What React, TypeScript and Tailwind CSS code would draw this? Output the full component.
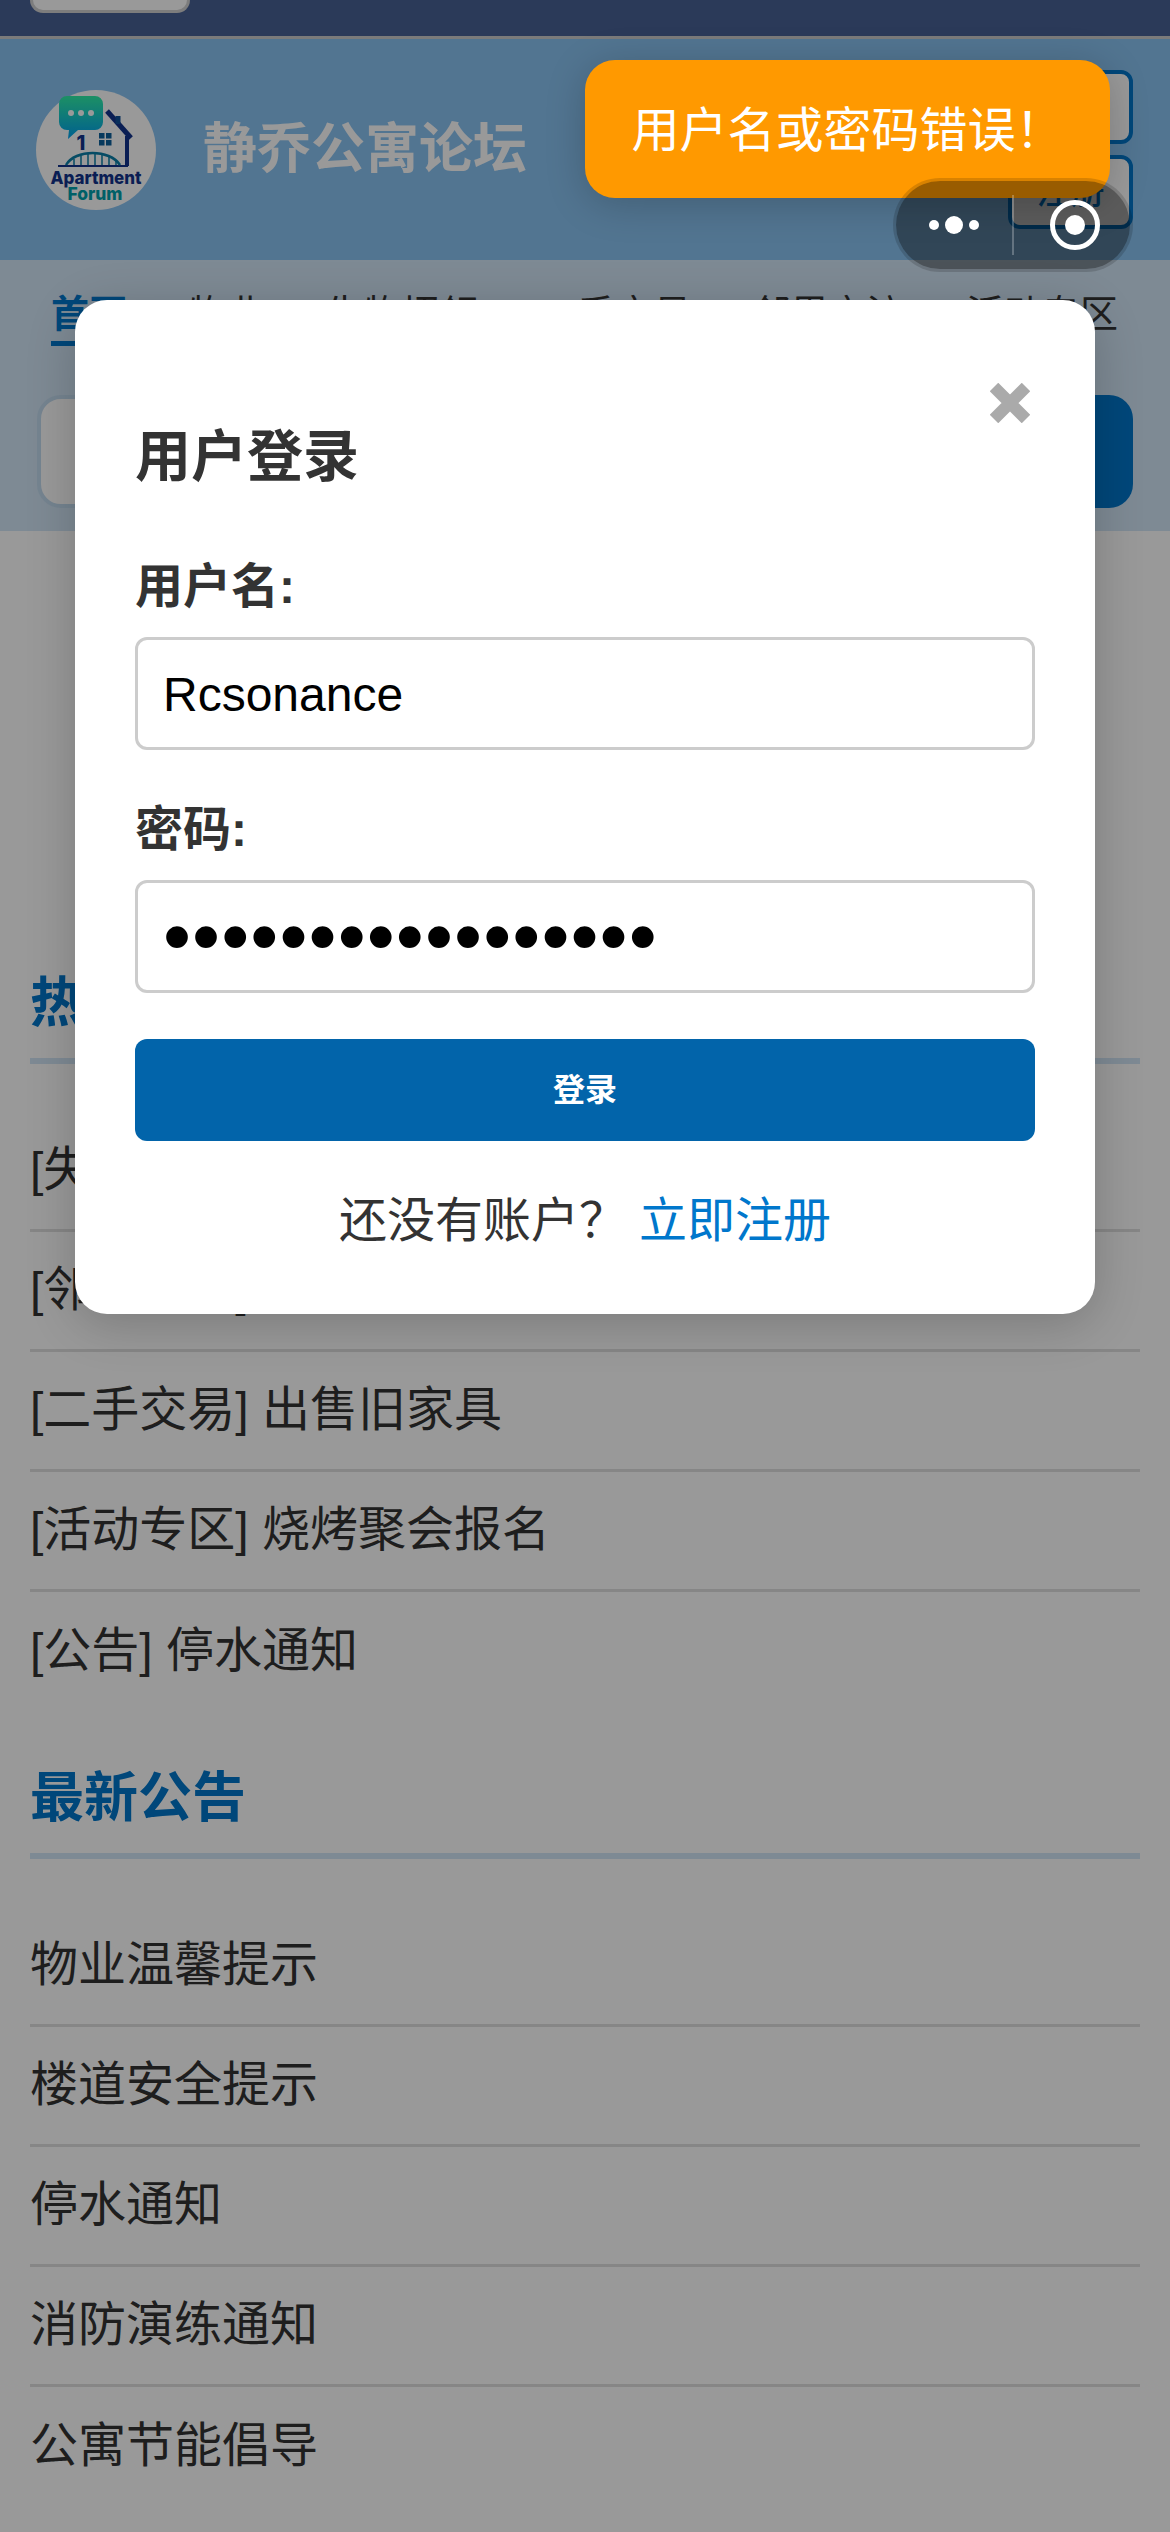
const hotTopics = [
  '[失物招领] 寻找丢失的钥匙',
  '[邻里交流] 周末一起打球',
  '[二手交易] 出售旧家具',
  '[活动专区] 烧烤聚会报名',
  '[公告] 停水通知',
]

const notices = ['物业温馨提示', '楼道安全提示', '停水通知', '消防演练通知', '公寓节能倡导']

const navItems = ['物业', '失物招领', '二手交易', '邻里交流', '活动专区']

function Logo() {
  return (
    <svg viewBox="0 0 120 120" className="h-[120px] w-[120px] shrink-0">
      <defs>
        <linearGradient id="bubble" x1="0" y1="0" x2="0" y2="1">
          <stop offset="0" stopColor="#30f0a8" />
          <stop offset="1" stopColor="#00a0f0" />
        </linearGradient>
      </defs>
      <circle cx="60" cy="60" r="60" fill="#ffffff" />
      <path
        d="M32 6h27a8 8 0 0 1 8 8v18a8 8 0 0 1-8 8H42l-10 9 1-9h-2a8 8 0 0 1-8-8V14a8 8 0 0 1 8-8z"
        fill="url(#bubble)"
      />
      <circle cx="35" cy="23" r="3" fill="#ffffff" />
      <circle cx="45" cy="23" r="3" fill="#ffffff" />
      <circle cx="55" cy="23" r="3" fill="#ffffff" />
      <path d="M71 21l24 27" stroke="#12338c" strokeWidth="5" fill="none" />
      <path d="M82 26v8" stroke="#0e4f98" strokeWidth="5" fill="none" />
      <path d="M91 46v30" stroke="#12338c" strokeWidth="4" fill="none" />
      <rect x="63" y="43" width="5.5" height="5.5" fill="#0a5f9c" />
      <rect x="70" y="43" width="5.5" height="5.5" fill="#0a5f9c" />
      <rect x="63" y="50" width="5.5" height="5.5" fill="#0a5f9c" />
      <rect x="70" y="50" width="5.5" height="5.5" fill="#0a5f9c" />
      <text x="45" y="60" textAnchor="middle" fontFamily="Inter" fontWeight="800" fontSize="20" fill="#12338c">
        1
      </text>
      <path d="M22 76h70" stroke="#12338c" strokeWidth="2" />
      <path d="M30 75c9-16 44-16 54 0" stroke="#0a7fa8" strokeWidth="2.5" fill="none" />
      <path d="M38 69v6M45 66v9M52 64v11M59 64v11M66 65v10M73 66v9M80 71v4" stroke="#0a7fa8" strokeWidth="1.5" />
      <text x="60" y="94" textAnchor="middle" textLength="91" lengthAdjust="spacingAndGlyphs" fontFamily="Inter" fontWeight="800" fontSize="18" fill="#12338c">
        Apartment
      </text>
      <text x="59" y="110" textAnchor="middle" textLength="55" lengthAdjust="spacingAndGlyphs" fontFamily="Inter" fontWeight="800" fontSize="18" fill="#00a0ac">
        Forum
      </text>
    </svg>
  )
}

function HeaderButton({ label }: { label: string }) {
  return (
    <div className="flex h-[74px] w-[125px] items-center justify-center rounded-xl border-4 border-[#0077cc] bg-white text-[34px] font-medium text-[#0077cc]">
      {label}
    </div>
  )
}

function Section({ title, items }: { title: string; items: string[] }) {
  return (
    <section className="mx-[30px]">
      <h2 className="border-b-[6px] border-[#d2e6f7] pt-[1px] pb-[17px] text-[54px] leading-[76px] font-bold text-[#0077cc]">
        {title}
      </h2>
      <ul className="mt-[48px]">
        {items.map((item) => (
          <li
            key={item}
            className="flex h-[120px] items-center border-b-[3px] border-[#e0e0e0] pb-[2px] text-[48px] text-[#333333] last:border-b-0"
          >
            {item}
          </li>
        ))}
      </ul>
    </section>
  )
}

function Page() {
  return (
    <div>
      <div className="h-[39px] border-b-[3px] border-[#cdcdcd] bg-[#496194] pl-[30px]">
        <div className="h-[13px] w-[160px] rounded-b-[14px] border-x-[3px] border-b-[3px] border-[#d0d0d0] bg-white" />
      </div>

      <header className="flex items-center justify-between bg-[#89c3f2] pt-[31px] pr-[37px] pb-[31px] pl-[36px]">
        <div className="flex items-center gap-[47px]">
          <Logo />
          <h1 className="text-[54px] font-semibold text-white">静乔公寓论坛</h1>
        </div>
        <div className="flex flex-col gap-[11px]">
          <HeaderButton label="登录" />
          <HeaderButton label="注册" />
        </div>
      </header>

      <div className="h-[271px] bg-[#d2e6f7] px-[37px] pt-[27px]">
        <nav className="flex justify-between pr-[15px] pl-[14px] text-[38px] leading-[54px] text-[#333333]">
          <span className="border-b-[5px] border-[#0077cc] font-bold text-[#0077cc]">首页</span>
          {navItems.map((item) => (
            <span key={item}>{item}</span>
          ))}
        </nav>
        <div className="mt-[49px] flex h-[113px]">
          <div className="flex-1 rounded-l-[24px] border-4 border-[#c4dcf0] bg-white" />
          <div className="flex w-[200px] items-center justify-center rounded-r-[24px] bg-[#0077cc] text-[38px] text-white">
            搜索
          </div>
        </div>
      </div>

      <div className="mt-[433px]">
        <Section title="热门话题" items={hotTopics} />
      </div>
      <div className="mt-[47px]">
        <Section title="最新公告" items={notices} />
      </div>
    </div>
  )
}

function LoginModal() {
  return (
    <div className="absolute top-[300px] left-[75px] w-[1020px] rounded-[32px] bg-white px-[60px] pt-[119px] pb-[59px] shadow-[0_10px_50px_rgba(0,0,0,0.2)]">
      <svg viewBox="0 0 40 40" className="absolute top-[83px] right-[65px] h-[40px] w-[40px]">
        <path d="M4 4l32 32M36 4L4 36" stroke="#aaaaaa" strokeWidth="12" fill="none" />
      </svg>
      <h2 className="text-[56px] leading-[76px] font-semibold text-[#333333]">用户登录</h2>

      <label className="mt-[58px] block text-[48px] leading-[68px] font-bold text-[#333333]">用户名:</label>
      <input
        readOnly
        value="Rcsonance"
        className="mt-[16px] block h-[113px] w-full rounded-xl border-[3px] border-[#cccccc] px-[25px] pt-[2px] text-[48px] text-black outline-none"
      />

      <label className="mt-[46px] block text-[48px] leading-[68px] font-bold text-[#333333]">密码:</label>
      <input
        readOnly
        type="password"
        value="aaaaaaaaaaaaaaaaa"
        className="mt-[16px] block h-[113px] w-full rounded-xl border-[3px] border-[#cccccc] px-[25px] text-[80px] tracking-[1.1px] text-black outline-none"
      />

      <button className="mt-[46px] flex h-[102px] w-full items-center justify-center rounded-xl bg-[#0264aa] text-[32px] font-bold text-white">
        登录
      </button>

      <p className="mt-[46px] text-center text-[48px] leading-[68px] text-[#333333]">
        还没有账户？<span className="ml-[12px] text-[#0077cc]">立即注册</span>
      </p>
    </div>
  )
}

function Toast() {
  return (
    <div className="absolute top-[60px] left-[585px] flex h-[138px] w-[525px] items-center justify-center rounded-[30px] bg-[#ff9900] pt-[3px] text-[48px] text-white shadow-[0_6px_40px_rgba(0,0,0,0.2)]">
      用户名或密码错误！
    </div>
  )
}

function Capsule() {
  return (
    <div className="absolute top-[181px] left-[896px] flex h-[88px] w-[234px] items-center rounded-full bg-black/40 shadow-[0_0_0_3px_rgba(0,0,0,0.15)]">
      <div className="flex w-[116px] items-center justify-center gap-[6px]">
        <span className="h-[10px] w-[10px] rounded-full bg-white" />
        <span className="h-[18px] w-[18px] rounded-full bg-white" />
        <span className="h-[10px] w-[10px] rounded-full bg-white" />
      </div>
      <div className="h-[60px] w-[2px] bg-white/25" />
      <div className="flex flex-1 items-center justify-center pl-[5px]">
        <div className="flex h-[50px] w-[50px] items-center justify-center rounded-full border-[5px] border-white">
          <span className="h-[20px] w-[20px] rounded-full bg-white" />
        </div>
      </div>
    </div>
  )
}

export default function App() {
  return (
    <div className="relative h-[2532px] w-[1170px] overflow-hidden bg-white font-['Liberation_Sans','Noto_Sans_CJK_SC',sans-serif]">
      <Page />
      <div className="absolute inset-0 bg-black/40" />
      <LoginModal />
      <Toast />
      <Capsule />
    </div>
  )
}
